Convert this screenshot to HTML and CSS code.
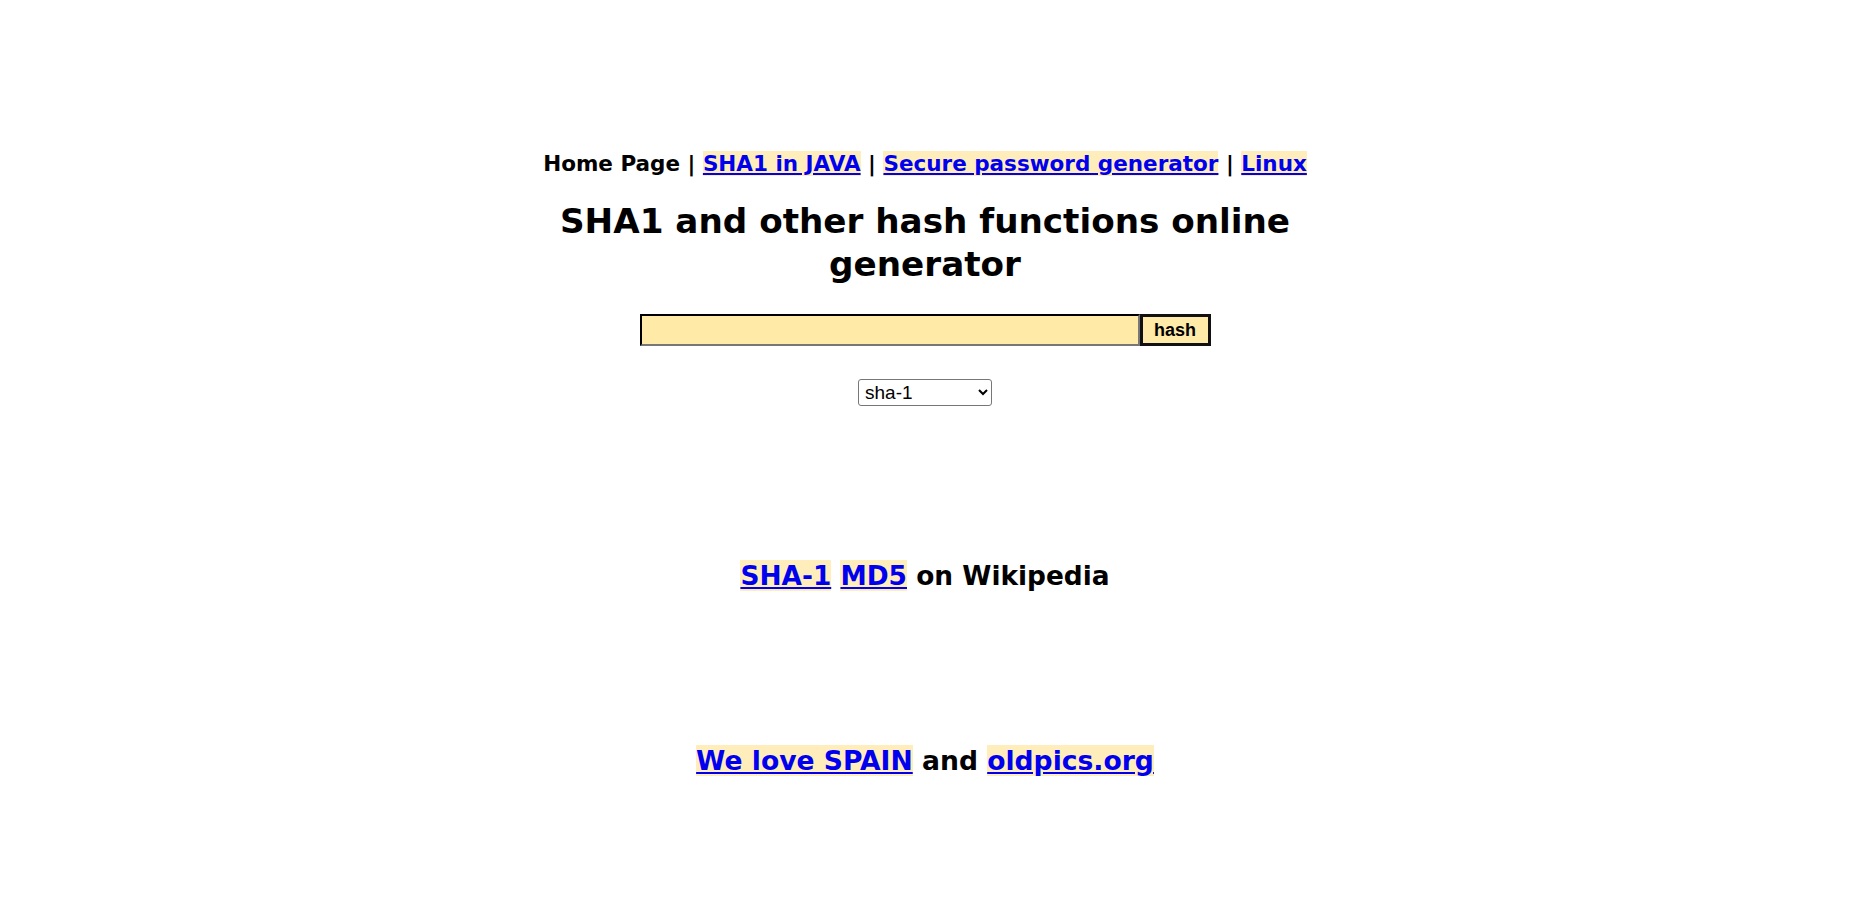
FILE: index.html
```html
<!DOCTYPE html>
<html>
<head>
<meta charset="utf-8">
<title>SHA1 online</title>
<link rel="stylesheet" href="styles.css">
</head>
<body>
<div class="page">
  <nav class="nav">Home Page | <a href="#">SHA1 in JAVA</a> | <a href="#">Secure password generator</a> | <a href="#">Linux</a></nav>
  <h1 class="title">SHA1 and other hash functions online<br>generator</h1>
  <form class="form">
    <div class="row"><input class="field" type="text"><button class="btn" type="button">hash</button></div>
    <div class="row sel-row"><select class="sel"><option>sha-1</option></select></div>
  </form>
  <h2 class="wiki"><a href="#">SHA-1</a> <a href="#">MD5</a> on Wikipedia</h2>
  <h2 class="love"><a href="#">We love SPAIN</a> and <a href="#">oldpics.org</a></h2>
</div>
</body>
</html>
```
FILE: styles.css
```css
html, body { margin: 0; padding: 0; background: #fff; }
body { font-family: "DejaVu Sans", Verdana, sans-serif; color: #000; }
.page { text-align: center; padding-top: 149px; }
a { color: #0000ee; background: #ffeebb; }
.nav { font-size: 21.5px; font-weight: bold; line-height: 30px; }
.title { font-size: 34.2px; margin: 21px 0 0; line-height: 43px; }
.form { margin-top: 28px; }
.row { display: flex; justify-content: center; }
.field { width: 500px; height: 32px; box-sizing: border-box; border: 2px inset #444; border-color: #222 #777 #777 #222; background: #ffeaa8; margin: 0; padding: 0; }
.btn { height: 32px; width: 71px; box-sizing: border-box; border: 3px solid #111; background: #ffeaa8; font-family: "Liberation Sans", Arial, sans-serif; font-weight: bold; font-size: 18px; margin: 0; padding: 0; }
.sel-row { margin-top: 33px; }
.sel { width: 134px; height: 27px; font-family: "Liberation Sans", Arial, sans-serif; font-size: 19px; border: 1px solid #777; border-radius: 3px; background: #fff; padding: 0 2px; }
.wiki { font-size: 26.4px; margin: 154px 0 0; }
.love { font-size: 26.6px; margin: 154px 0 0; }
```
